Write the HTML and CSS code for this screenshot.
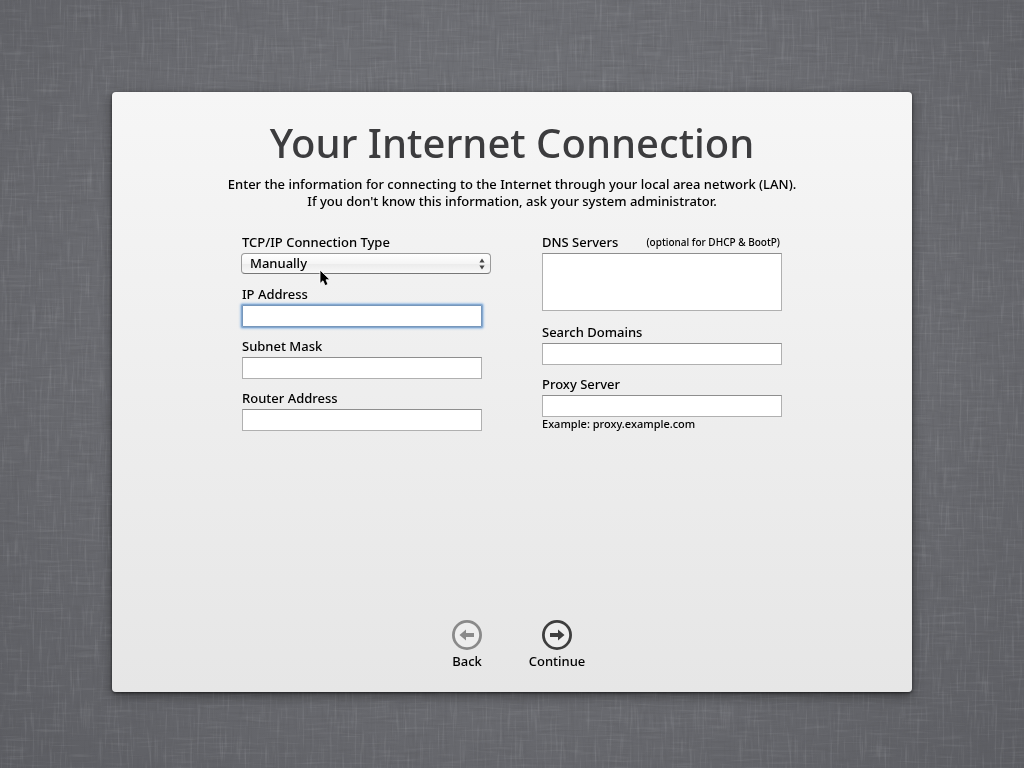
FILE: index.html
```html
<!DOCTYPE html>
<html lang="en">
<head>
<meta charset="utf-8">
<meta name="viewport" content="width=device-width, initial-scale=1">
<title>Your Internet Connection</title>
<link rel="stylesheet" href="styles.css">
</head>
<body>
<svg class="linen" aria-hidden="true">
  <filter id="weft" x="0" y="0" width="100%" height="100%">
    <feTurbulence type="fractalNoise" baseFrequency="0.03 0.4" numOctaves="2" seed="4"/>
    <feColorMatrix values="0 0 0 0 0.1  0 0 0 0 0.1  0 0 0 0 0.11  3 0 0 0 -1.6"/>
  </filter>
  <filter id="warp" x="0" y="0" width="100%" height="100%">
    <feTurbulence type="fractalNoise" baseFrequency="0.4 0.03" numOctaves="2" seed="9"/>
    <feColorMatrix values="0 0 0 0 0.8  0 0 0 0 0.82  0 0 0 0 0.85  3 0 0 0 -1.6"/>
  </filter>
  <filter id="thread" x="0" y="0" width="100%" height="100%">
    <feTurbulence type="fractalNoise" baseFrequency="0.03 0.4" numOctaves="2" seed="21"/>
    <feColorMatrix values="0 0 0 0 0.8  0 0 0 0 0.82  0 0 0 0 0.85  3 0 0 0 -1.6"/>
  </filter>
  <filter id="shade" x="0" y="0" width="100%" height="100%">
    <feTurbulence type="fractalNoise" baseFrequency="0.4 0.03" numOctaves="2" seed="33"/>
    <feColorMatrix values="0 0 0 0 0.1  0 0 0 0 0.1  0 0 0 0 0.11  3 0 0 0 -1.6"/>
  </filter>
  <rect width="100%" height="100%" filter="url(#weft)" opacity="0.28"/>
  <rect width="100%" height="100%" filter="url(#shade)" opacity="0.24"/>
  <rect width="100%" height="100%" filter="url(#warp)" opacity="0.1"/>
  <rect width="100%" height="100%" filter="url(#thread)" opacity="0.08"/>
</svg>
<main class="panel">
  <h1 class="title">Your Internet Connection</h1>
  <p class="intro">Enter the information for connecting to the Internet through your local area network (LAN).<br>If you don't know this information, ask your system administrator.</p>
  <form class="form">
    <div class="columns">
      <div class="column">
        <div class="field">
          <label class="label" for="type">TCP/IP Connection Type</label>
          <div class="popup">
            <select class="select" id="type"><option>Manually</option></select>
            <svg class="arrows" viewBox="0 0 6 12" aria-hidden="true"><path d="M3 0.5 5.6 4.5H0.4zM3 11.5 0.4 7.5H5.6z" fill="#444"/></svg>
            <svg class="pointer" viewBox="0 0 12 18" aria-hidden="true"><path d="M1 1V14.500L4 11.800 6 16.600 9 15.400 7 10.800H11z" fill="#000" stroke="#fff" stroke-width="0.8"/></svg>
          </div>
        </div>
        <div class="field">
          <label class="label" for="ip">IP Address</label>
          <input class="input focused" id="ip" type="text">
        </div>
        <div class="field">
          <label class="label" for="mask">Subnet Mask</label>
          <input class="input" id="mask" type="text">
        </div>
        <div class="field">
          <label class="label" for="router">Router Address</label>
          <input class="input" id="router" type="text">
        </div>
      </div>
      <div class="column">
        <div class="field">
          <label class="label split" for="dns">DNS Servers <span class="optional">(optional for DHCP &amp; BootP)</span></label>
          <textarea class="input area" id="dns"></textarea>
        </div>
        <div class="field">
          <label class="label" for="domains">Search Domains</label>
          <input class="input" id="domains" type="text">
        </div>
        <div class="field">
          <label class="label" for="proxy">Proxy Server</label>
          <input class="input" id="proxy" type="text" aria-describedby="hint">
          <p class="hint" id="hint">Example: proxy.example.com</p>
        </div>
      </div>
    </div>
    <div class="actions">
      <button class="nav back" type="button">
        <svg class="icon" viewBox="0 0 30 30" aria-hidden="true"><circle cx="15" cy="15" r="13.6" fill="#eee" stroke="currentColor" stroke-width="2.8"/><path d="M7.5 15 14 9.5V13H22V17H14V20.500z" fill="currentColor"/></svg>
        Back
      </button>
      <button class="nav continue" type="button">
        <svg class="icon" viewBox="0 0 30 30" aria-hidden="true"><circle cx="15" cy="15" r="13.6" fill="#eee" stroke="currentColor" stroke-width="2.8"/><path d="M22.500 15 16 9.500V13H8V17H16V20.500z" fill="currentColor"/></svg>
        Continue
      </button>
    </div>
  </form>
</main>
</body>
</html>
```

FILE: styles.css
```css
* {
  box-sizing: border-box;
}

body {
  margin: 0;
  min-height: 100vh;
  padding: 40px 24px 24px;
  display: flex;
  align-items: center;
  justify-content: center;
  background: radial-gradient(ellipse at 50% 40%, #74767b 0%, #6b6c71 55%, #5c5d62 100%);
  color: #000;
  font: 500 13px/17px "Lucida Grande", "Noto Sans", sans-serif;
}

.linen {
  position: fixed;
  inset: 0;
  width: 100%;
  height: 100%;
}

.panel {
  position: relative;
  display: flex;
  flex-direction: column;
  width: 100%;
  max-width: 800px;
  min-height: 600px;
  padding: 23px 20px 20px;
  border-radius: 4px;
  background: linear-gradient(#f6f6f6, #e6e6e6);
  box-shadow: 0 1px 3px rgba(0, 0, 0, 0.6), 0 4px 12px rgba(0, 0, 0, 0.4);
}

.title {
  margin: 0;
  color: #3c3c3e;
  font-size: 40px;
  font-weight: 500;
  line-height: 56px;
  text-align: center;
}

.intro {
  margin: 5px 0 0;
  text-align: center;
}

.form {
  display: flex;
  flex: 1;
  flex-direction: column;
  justify-content: space-between;
  align-items: center;
  gap: 32px;
  margin-top: 21px;
}

.columns {
  display: grid;
  grid-template-columns: repeat(2, minmax(0, 240px));
  justify-content: center;
  gap: 60px;
  width: 100%;
}

.column,
.field {
  display: flex;
  flex-direction: column;
}

.column {
  gap: 8px;
}

.label {
  line-height: 22px;
}

.split {
  display: flex;
  justify-content: space-between;
  padding-right: 2px;
}

.optional {
  font-size: 10px;
}

.input {
  width: 100%;
  height: 22px;
  margin: 0;
  padding: 2px 4px;
  border: 1px solid #b0b0b0;
  border-top-color: #8e8e8e;
  border-radius: 0;
  outline: none;
  background: #fff;
  font: inherit;
}

.focused,
.input:focus {
  border-color: #7797bb;
  border-radius: 1px;
  box-shadow: 0 0 0 1px #86a9d0, 0 0 2px 2px #a4c4e6;
}

.area {
  height: 58px;
  margin-bottom: 2px;
  resize: none;
}

.popup {
  position: relative;
  height: 22px;
  margin: 0 -9px 0 -1px;
}

.select {
  display: block;
  width: 100%;
  height: 21px;
  padding: 0 20px 0 8px;
  appearance: none;
  border: 1px solid #9a9a9a;
  border-bottom-color: #777;
  border-radius: 4px;
  background: linear-gradient(#fff, #f5f5f5 50%, #ebebeb 51%, #f8f8f8);
  color: #000;
  font: inherit;
}

.arrows {
  position: absolute;
  top: 5px;
  right: 6px;
  width: 6px;
  height: 12px;
}

.pointer {
  position: absolute;
  top: 16px;
  left: 78px;
  width: 12px;
  height: 18px;
}

.hint {
  margin: 0;
  font-size: 11px;
  line-height: 14px;
}

.actions {
  display: grid;
  grid-template-columns: repeat(2, 90px);
}

.nav {
  display: flex;
  flex-direction: column;
  align-items: center;
  gap: 2px;
  padding: 0 0 2px;
  border: 0;
  background: none;
  color: #000;
  font: inherit;
  line-height: 18px;
}

.icon {
  width: 30px;
  height: 30px;
}

.back .icon {
  color: #8a8a8a;
}

.continue .icon {
  color: #3e3e3e;
}
```
